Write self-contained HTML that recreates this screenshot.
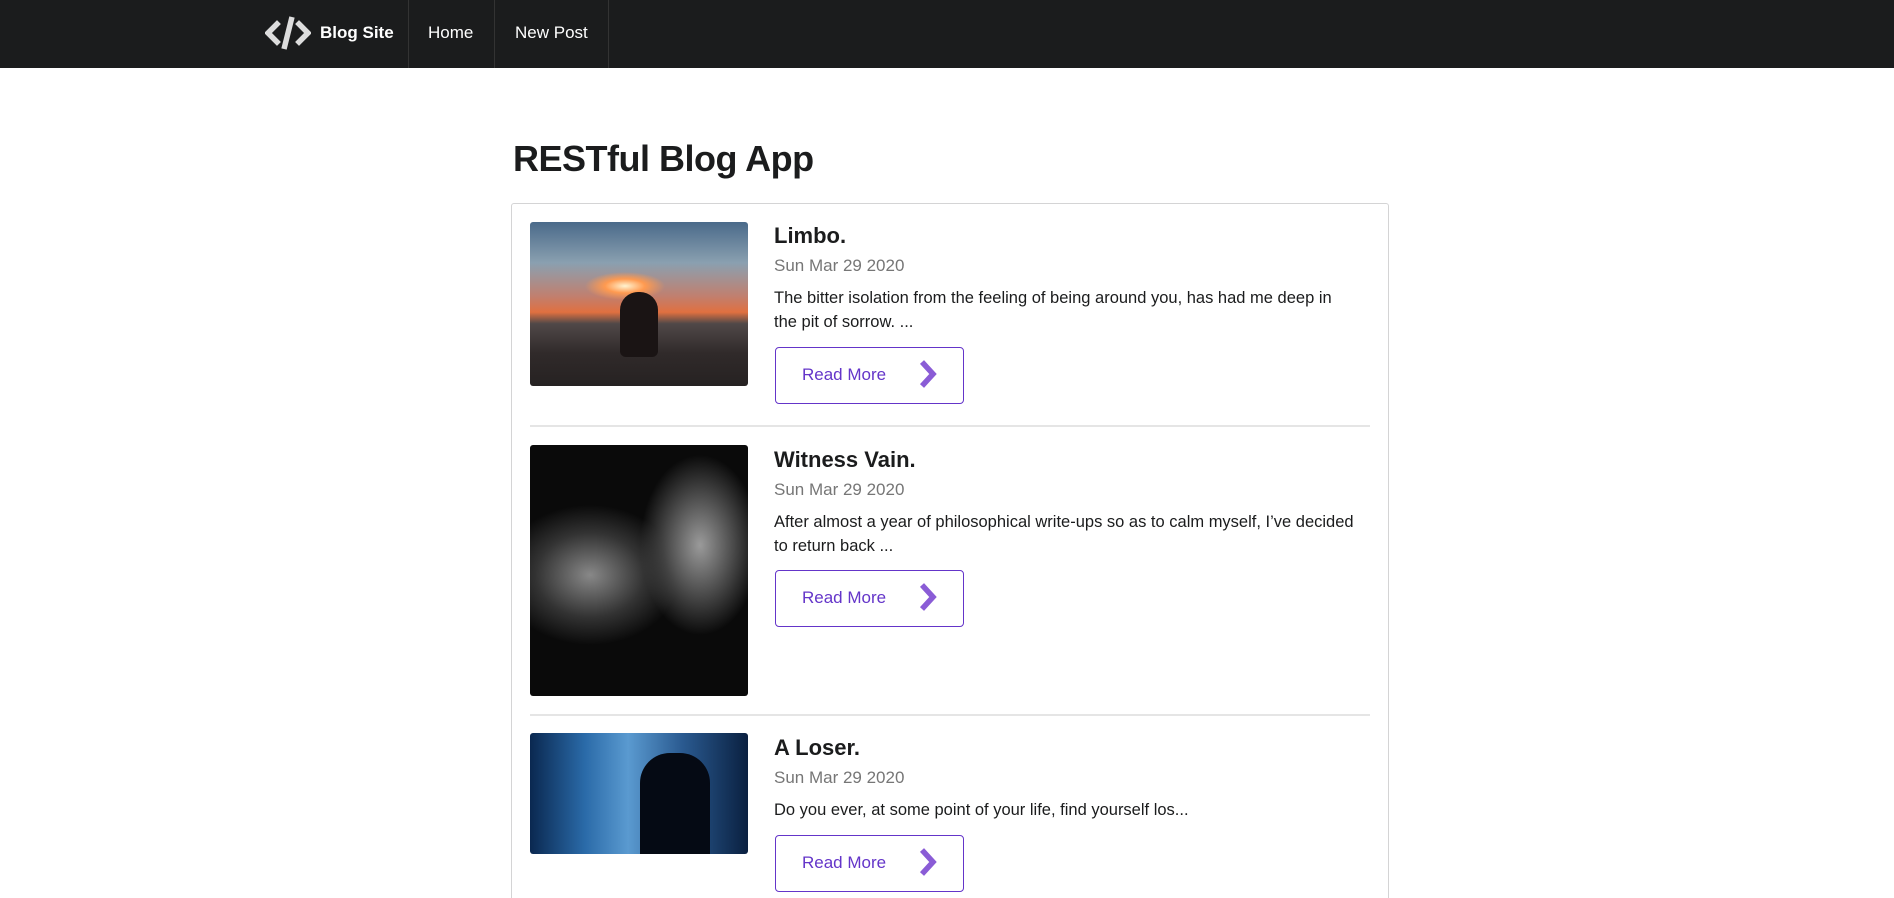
<!DOCTYPE html>
<html><head><meta charset="utf-8"><style>
*{box-sizing:border-box;margin:0;padding:0}
html{width:1894px;height:898px;overflow:hidden}
body{width:1894px;height:898px;overflow:hidden;background:#fff;font-family:"Liberation Sans",sans-serif;color:#1b1c1d;position:relative}
.nav{position:absolute;left:0;top:0;width:1894px;height:68px;background:#1b1c1d}
.nav .div{position:absolute;top:0;width:1px;height:68px;background:#333}
.nav .t{position:absolute;color:#fff;font-size:17px;top:23px}
h1{position:absolute;left:513px;top:138px;font-size:36px;font-weight:bold;letter-spacing:-0.5px}
.card{position:absolute;left:511px;top:203px;width:878px;height:700px;border:1px solid #d4d4d5;border-radius:3px}
.img{position:absolute;left:530px;width:218px;border-radius:3px}
.ttl{position:absolute;left:774px;font-size:22px;font-weight:bold}
.date{position:absolute;left:774px;font-size:17px;color:#767676}
.txt{position:absolute;left:774px;font-size:16.5px;line-height:24px;width:620px}
.btn{position:absolute;left:775px;width:189px;height:57px;border:1.5px solid #6435c9;border-radius:4px;color:#6435c9;font-size:17px}
.btn span{position:absolute;left:26px;top:17px}
.btn svg{position:absolute;left:137px;top:6px}
.hr{position:absolute;left:530px;width:840px;height:2px;background:#e5e5e5}
</style></head><body>
<div class="nav">
<svg style="position:absolute;left:265px;top:15px" width="46" height="36" viewBox="0 0 46 36"><path d="M12 9 L3 18 L12 27" stroke="#ddd" stroke-width="5.5" fill="none" stroke-linecap="square"/><path d="M34 9 L43 18 L34 27" stroke="#ddd" stroke-width="5.5" fill="none" stroke-linecap="square"/><path d="M27 2 L19 34" stroke="#ddd" stroke-width="5.5"/></svg>
<div class="t" style="left:320px;font-weight:bold">Blog Site</div>
<div class="div" style="left:408px"></div>
<div class="t" style="left:428px">Home</div>
<div class="div" style="left:494px"></div>
<div class="t" style="left:515px">New Post</div>
<div class="div" style="left:608px"></div>
</div>
<h1>RESTful Blog App</h1>
<div class="card"></div>

<div class="img" style="top:222px;height:164px;background:radial-gradient(ellipse 40px 14px at 95px 64px,#fff3d0,#ff9a50 50%,transparent 100%),linear-gradient(#4a6a8a 0%,#8aa0b0 25%,#c08070 45%,#e07040 55%,#504848 62%,#302a2a 80%,#262222 100%)"><div style="position:absolute;left:90px;top:70px;width:38px;height:65px;background:#1a1414;border-radius:18px 18px 6px 6px"></div></div>
<div class="ttl" style="top:223px">Limbo.</div>
<div class="date" style="top:256px">Sun Mar 29 2020</div>
<div class="txt" style="top:286px">The bitter isolation from the feeling of being around you, has had me deep in<br>the pit of sorrow. ...</div>
<div class="btn" style="top:347px"><span>Read More</span><svg width="30" height="42" viewBox="0 0 30 42"><path d="M9 8 L20 20 L9 32" stroke="#8a5cd6" stroke-width="5.5" fill="none"/></svg></div>
<div class="hr" style="top:425px"></div>

<div class="img" style="top:445px;height:251px;background:radial-gradient(ellipse 60px 90px at 170px 100px,#9a9a9a,#444 60%,transparent 100%),radial-gradient(ellipse 90px 70px at 60px 130px,#888,#333 60%,transparent 100%),#0a0a0a"></div>
<div class="ttl" style="top:447px">Witness Vain.</div>
<div class="date" style="top:480px">Sun Mar 29 2020</div>
<div class="txt" style="top:510px">After almost a year of philosophical write-ups so as to calm myself, I’ve decided<br>to return back ...</div>
<div class="btn" style="top:570px"><span>Read More</span><svg width="30" height="42" viewBox="0 0 30 42"><path d="M9 8 L20 20 L9 32" stroke="#8a5cd6" stroke-width="5.5" fill="none"/></svg></div>
<div class="hr" style="top:714px"></div>

<div class="img" style="top:733px;height:121px;background:linear-gradient(90deg,#0a2850 0%,#2a6aa8 25%,#5a9ad0 45%,#2a5a90 70%,#0a2040 100%)"><div style="position:absolute;left:110px;top:20px;width:70px;height:101px;background:#050a14;border-radius:30px 30px 0 0"></div></div>
<div class="ttl" style="top:735px">A Loser.</div>
<div class="date" style="top:768px">Sun Mar 29 2020</div>
<div class="txt" style="top:798px">Do you ever, at some point of your life, find yourself los...</div>
<div class="btn" style="top:835px"><span>Read More</span><svg width="30" height="42" viewBox="0 0 30 42"><path d="M9 8 L20 20 L9 32" stroke="#8a5cd6" stroke-width="5.5" fill="none"/></svg></div>
</body></html>
